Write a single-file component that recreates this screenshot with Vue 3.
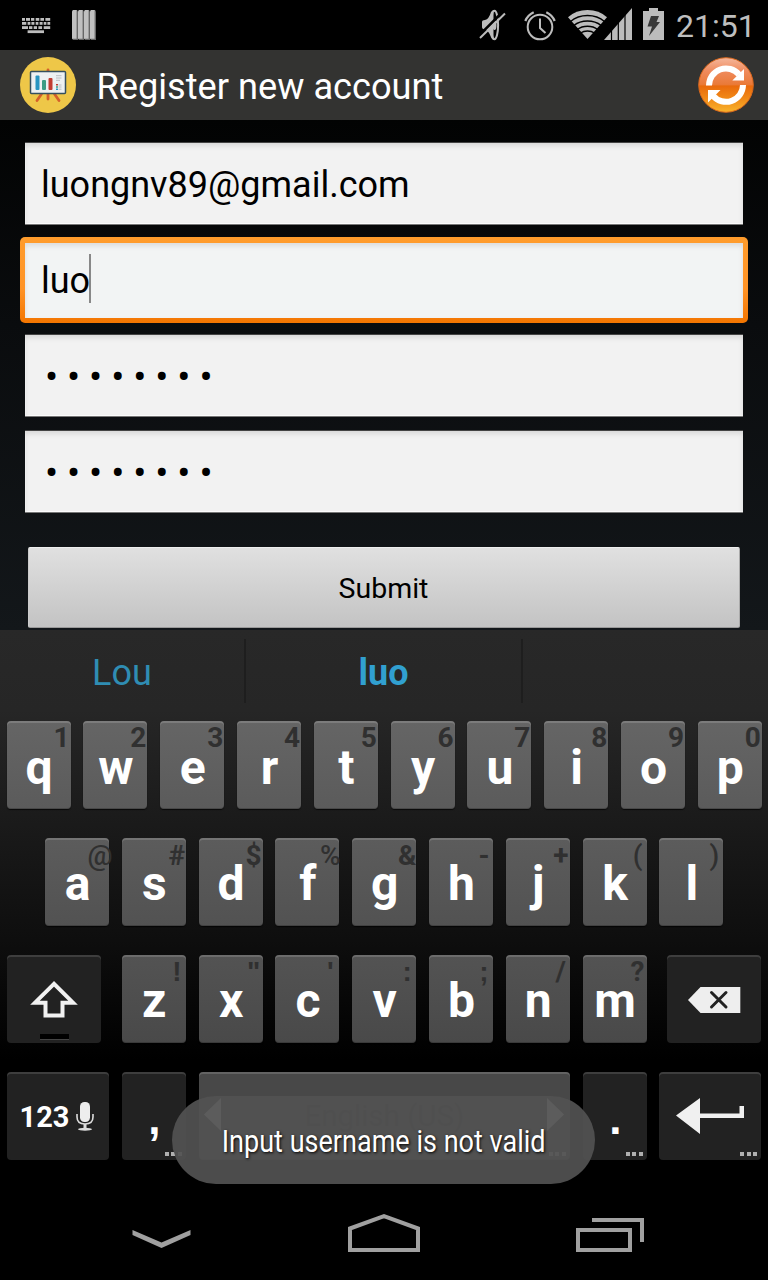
<script setup>
const spread = (letters, hints) => [...letters].map((c, i) => ({ c, h: hints[i] }))
const row1 = spread('qwertyuiop', '1234567890')
const row2 = spread('asdfghjkl', '@#$%&-+()')
const row3 = spread('zxcvbnm', '!"\':;/?')
const hintClass = (h) => ({ light: '@%()'.includes(h), square: '!:;\'"'.includes(h) })
const keycaps = [
  [0, 0, 3], [4, 0, 4], [9, 0, 3.3], [13.7, 0, 3.6], [18.4, 0, 3.6], [23.4, 0, 4.8],
  [0, 4, 4.3], [5.6, 4, 2.8], [9.4, 4, 3], [13.7, 4, 2.7], [17.6, 4, 3], [21.7, 4, 2.7], [25.4, 4, 2.8],
  [0, 8.2, 6], [7, 8.2, 3.4], [11.7, 8.2, 3.3], [16.4, 8.2, 3.7], [21.7, 8.2, 6.5],
]
</script>

<template>
  <div class="phone">
    <header class="status">
      <svg class="ic-kb" width="29" height="16" viewBox="0 0 29 16" fill="#bdbdbd">
        <rect v-for="(k, i) in keycaps" :key="i" :x="k[0]" :y="k[1]" :width="k[2]" height="2.8" />
        <rect x="5.6" y="12.3" width="16.4" height="2.8" />
      </svg>
      <svg class="ic-bars" width="24" height="30" viewBox="0 0 24 30">
        <g v-for="n in 4" :key="n" :transform="`translate(${(n - 1) * 6} 0)`">
          <path d="M0 1.5L1 0h4l1 1.5V30H1L0 28.5z" fill="#666" />
          <path d="M0 1.5L1 0h3.6v28.8H0z" fill="#c0c0c0" />
        </g>
      </svg>
      <span class="grow"></span>
      <svg class="ic-mute" width="28" height="32" viewBox="0 0 28 32">
        <path d="M3 13Q3 11 6 11Q10 10 12 3Q14 .5 15.5 1.2V31Q13 31.500 11.500 27Q9 21 6 20.500Q3 20 3 18z" fill="#bcbcbc" />
        <ellipse cx="15.500" cy="16" rx="3.600" ry="14.300" fill="#000" stroke="#bcbcbc" stroke-width="2" />
        <path d="M9 13Q12 10 13 5L14.500 4V28L13 27Q12 22 9 19z" fill="#bcbcbc" />
        <ellipse cx="15.500" cy="16" rx="2" ry="5" fill="#bcbcbc" />
        <path d="M-.5 27L24 2.500" stroke="#000" stroke-width="2.500" />
        <path d="M1 29L26 4.500" stroke="#bcbcbc" stroke-width="2" />
      </svg>
      <svg class="ic-alarm" width="32" height="32" viewBox="0 0 32 32" fill="none" stroke="#bcbcbc" stroke-width="2">
        <circle cx="16" cy="18" r="12.300" />
        <path d="M16 9.500V19l5.500 5" />
        <path d="M1.300 12A17 17 0 0 1 9.700 3.300M22.300 3.300A17 17 0 0 1 30.700 12" stroke-width="2.300" />
      </svg>
      <svg class="ic-wifi" width="39" height="31" viewBox="0 0 39 31">
        <path d="M19.500 30L0 8.200Q8 1 19.500 1T39 8.200z" fill="#bcbcbc" />
        <g fill="none" stroke="#000" stroke-width="1.500">
          <path d="M2.500 12.500Q9.500 6.600 19.500 6.600T36.500 12.500" />
          <path d="M5.800 16.500Q11.500 12 19.500 12T33.200 16.500" />
          <path d="M9.300 20.500Q13.500 17.300 19.500 17.300T29.700 20.500" />
          <path d="M12.500 24Q15.500 22 19.500 22T26.500 24" />
        </g>
      </svg>
      <svg class="ic-signal" width="28" height="32" viewBox="0 0 28 32">
        <path d="M0 32L28 0v32z" fill="#bcbcbc" />
        <path d="M7.500 0v32M14.300 0v32M21 0v32" stroke="#000" stroke-width="1.200" />
      </svg>
      <svg class="ic-batt" width="21" height="32" viewBox="0 0 21 32">
        <path d="M6 0h9v3h6v29H0V3h6z" fill="#bcbcbc" />
        <path d="M8 8h8l-2.500 6H17L6 28l3-9.500H4.500z" fill="#383838" />
      </svg>
      <time class="clock">21:51</time>
    </header>

    <div class="bar">
      <svg class="logo" width="56" height="56" viewBox="0 0 56 56">
        <circle cx="28" cy="28" r="28" fill="#eec748" />
        <g stroke="#d4602b" stroke-width="2.800" stroke-linecap="round">
          <path d="M28 13v3M28 36v6M21.500 37L17 43.500M34.500 37L39 43.500" />
        </g>
        <rect x="10.500" y="14.500" width="35" height="22" rx="1" fill="#edf1f2" stroke="#34505f" stroke-width="1.500" />
        <rect x="15.500" y="18.500" width="4" height="14.500" rx="1" fill="#2795c1" />
        <rect x="22" y="23" width="4" height="10" rx="1" fill="#3a9c84" />
        <rect x="28.500" y="21" width="4" height="12" rx="1" fill="#c13c31" />
        <path d="M36 18.700h5.500M36 21h5.500M36 23.300h4" stroke="#b9bec2" stroke-width="1" />
        <path d="M38.500 28h3M38.500 30h3M38.500 32.200h3" stroke="#b9bec2" stroke-width="1" />
        <path d="M36 27.800h2" stroke="#c13c31" stroke-width="1.600" />
        <path d="M36 30h2" stroke="#3a9c84" stroke-width="1.600" />
        <path d="M36 32.200h2" stroke="#2795c1" stroke-width="1.600" />
      </svg>
      <h1>Register new account</h1>
      <svg class="refresh" width="56" height="56" viewBox="0 0 56 56">
        <defs>
          <linearGradient id="orb" x1="0" y1="0" x2="0" y2="1">
            <stop offset="0" stop-color="#f5b79c" />
            <stop offset=".25" stop-color="#ef8a5c" />
            <stop offset=".49" stop-color="#ea7a38" />
            <stop offset=".52" stop-color="#e96a0c" />
            <stop offset=".75" stop-color="#f18a18" />
            <stop offset="1" stop-color="#f8b42c" />
          </linearGradient>
        </defs>
        <circle cx="28" cy="28" r="27.300" fill="url(#orb)" stroke="#d9671c" stroke-width="1" />
        <g fill="none" stroke="#fff" stroke-width="6">
          <path d="M11 28.500A17 17 0 0 1 41 17.500" />
          <path d="M45 28A17 17 0 0 1 15 38.800" />
        </g>
        <path d="M46 12v11.500H34.300zM10 45.500V33h12.500z" fill="#fff" />
      </svg>
    </div>

    <main class="form">
      <div class="field">luongnv89@gmail.com</div>
      <div class="field focus">luo<i class="caret"></i></div>
      <div class="field dots">••••••••</div>
      <div class="field dots">••••••••</div>
      <button class="submit">Submit</button>
    </main>

    <section class="keyboard">
      <div class="suggest">
        <span>Lou</span><span class="best">luo</span><span></span>
      </div>
      <div class="row r1">
        <div v-for="k in row1" :key="k.c" class="key"><b>{{ k.c }}</b><em>{{ k.h }}</em></div>
      </div>
      <div class="row r2">
        <div v-for="k in row2" :key="k.c" class="key"><b>{{ k.c }}</b><em :class="hintClass(k.h)">{{ k.h }}</em></div>
      </div>
      <div class="row r3">
        <div class="key fn shift">
          <svg width="94" height="88" viewBox="0 0 94 88">
            <path d="M47 28.800L28 47.700H38.500V60.500H55.500V47.700H66z" fill="none" stroke="#f2f2f2" stroke-width="4" />
            <rect x="33" y="79" width="29" height="5" fill="#000" />
            <path d="M33 84.500h29" stroke="#444" stroke-width="1" />
          </svg>
        </div>
        <div v-for="k in row3" :key="k.c" class="key"><b>{{ k.c }}</b><em :class="hintClass(k.h)">{{ k.h }}</em></div>
        <div class="key fn del">
          <svg width="94" height="88" viewBox="0 0 94 88">
            <path d="M21 45L33.500 32H73.300V58H33.500z" fill="#eee" />
            <path d="M44.500 37.500L59 52M59 37.500L44.500 52" stroke="#222" stroke-width="3" stroke-linecap="round" />
          </svg>
        </div>
      </div>
      <div class="row r4">
        <div class="key fn wide num">
          <span>123</span>
          <svg width="18" height="30" viewBox="0 0 18 30" fill="none" stroke="#dcdcdc">
            <rect x="4" y="0" width="10" height="20" rx="4.500" fill="#ededed" stroke="none" />
            <path d="M1 12v3q0 7 8 7t8-7v-3" stroke-width="1.600" />
            <path d="M9 22v4" stroke-width="3" />
            <ellipse cx="9" cy="27.300" rx="7" ry="1.500" fill="#dcdcdc" stroke="none" />
          </svg>
        </div>
        <div class="key fn punct"><b>,</b><i class="more"><u></u><u></u><u></u></i></div>
        <div class="key space">
          <svg width="18" height="34" viewBox="0 0 18 34"><path d="M17 0v33L0 16.500z" fill="#fff" fill-opacity=".85" /></svg>
          <span>English (US)</span>
          <svg width="18" height="34" viewBox="0 0 18 34"><path d="M0 0v33L17 16.500z" fill="#fff" fill-opacity=".85" /></svg>
          <i class="more"><u></u><u></u><u></u></i>
        </div>
        <div class="key fn punct"><b>.</b><i class="more"><u></u><u></u><u></u></i></div>
        <div class="key fn wide enter">
          <svg width="102" height="88" viewBox="0 0 102 88">
            <path d="M17 43.500L41 26V41.500H80.500V34H85V46H41V62z" fill="#f0f0f0" />
          </svg>
          <i class="more"><u></u><u></u><u></u></i>
        </div>
      </div>
    </section>

    <nav class="nav">
      <svg width="60" height="40" viewBox="0 0 60 40"><path d="M.5 16V21L29.500 34L58.500 21V16L29.500 28.500z" fill="#a0a0a0" /></svg>
      <svg width="72" height="40" viewBox="0 0 72 40"><path d="M2 14.500L36 2.200L70 14.500V36H2z" fill="none" stroke="#a0a0a0" stroke-width="4" /></svg>
      <svg width="68" height="40" viewBox="0 0 68 40"><path d="M2 16h52v20H2zM16 6h50v22" fill="none" stroke="#a0a0a0" stroke-width="4" /></svg>
    </nav>

    <div class="toast"><span>Input username is not valid</span></div>
  </div>
</template>

<style>
body { margin: 0; background: #000; }
</style>

<style scoped>
* { box-sizing: border-box; }
.phone {
  position: relative; width: 768px; height: 1280px; overflow: hidden; background: #000;
  display: flex; flex-direction: column; font-family: Roboto, "Liberation Sans", sans-serif;
}
svg { display: block; flex: none; }
.status { height: 50px; display: flex; align-items: flex-start; padding-left: 22px; }
.grow { flex: 1; }
.ic-kb { margin-top: 18px; }
.ic-bars { margin: 10px 0 0 21px; }
.ic-mute { margin: 9px 17px 0 0; }
.ic-alarm { margin: 9px 12px 0 0; }
.ic-wifi { margin: 9px -3px 0 0; }
.ic-signal { margin: 8px 11px 0 0; }
.ic-batt { margin: 8px 12px 0 0; }
.clock { width: 92px; font-size: 32px; line-height: 38px; margin-top: 7px; color: #bebebe; white-space: nowrap; }
.bar { height: 70px; background: #333331; display: flex; align-items: center; padding: 0 14px 0 20px; }
h1 { flex: 1; margin: 4px 0 0 20.500px; font-size: 36.200px; line-height: 42px; font-weight: 400; color: #fff; }
.form {
  height: 510px; padding: 23px 25px 0; display: flex; flex-direction: column;
  background: linear-gradient(#020303, #0a0c0e 40%, #13171a);
}
.field {
  position: relative; height: 81px; margin-bottom: 15px; padding-left: 16px; font-size: 36px; line-height: 85px;
  color: #000; background: #f2f2f2; box-shadow: inset 0 3px 5px #d9d9d9, inset 1px -1px 0 #fff, 0 1px 0 #777, 0 -1px 0 #444; flex: none;
}
.focus {
  height: 75px; margin: 4px 0 17px; line-height: 77px; background: #f2f4f4;
  box-shadow: inset 0 3px 5px #dcdcdc;
}
.focus::before {
  content: ""; position: absolute; inset: -6px -5px -5px; border-radius: 5px; z-index: 0;
  background: linear-gradient(#ff9c2c, #ff9326 60%, #f37500); clip-path: polygon(0 0, 100% 0, 100% 100%, 0 100%, 0 6px, 5px 6px, 5px calc(100% - 5px), calc(100% - 5px) calc(100% - 5px), calc(100% - 5px) 6px, 0 6px);
}
.caret { position: absolute; left: 64px; top: 11px; width: 2px; height: 49px; background: #888; }
.dots { font-size: 39px; letter-spacing: 8.900px; padding-left: 20px; line-height: 84px; }
.submit {
  height: 81px; margin: 20px 3px 0; border: 1px solid #999; border-color: #eee #aaa #999 #ccc; border-radius: 2px; padding: 1px 1px 0 0;
  background: linear-gradient(#e0e0e0, #c3c3c3); font: 28.500px Roboto, sans-serif; color: #000;
}
.keyboard { height: 554px; background: linear-gradient(#282828, #262626 80px, #0e0e0e 310px, #000 430px); }
.suggest { height: 91px; display: flex; padding-top: 9px; }
.suggest span {
  height: 64px; line-height: 69px; flex: 1; text-align: center; font-size: 36px; color: #2f8db3; border-right: 2px solid #1e1e1e;
}
.suggest span:first-child { flex: 0 0 246px; }
.suggest span:last-child { flex: 0 0 245px; border: 0; }
.suggest .best { color: #31a0d0; font-weight: 700; }
.row { display: flex; gap: 12.800px; height: 88px; margin-bottom: 29px; }
.r1 { padding-left: 6.600px; }
.r3, .r4 { padding-left: 7px; }
.r2 { padding-left: 45px; }
.key {
  position: relative; width: 64px; height: 88px; flex: none; border-radius: 4px; color: #fff; text-align: center;
  box-shadow: inset 0 2px 0 rgba(255, 255, 255, .15), inset 0 -1px 0 rgba(0, 0, 0, .2), 0 1px 1px rgba(0, 0, 0, .7);
}
.r1 .key { background: linear-gradient(#656565, #5b5b5b); }
.r2 .key { background: linear-gradient(#5c5c5c, #525252); }
.r3 .key { background: linear-gradient(#535353, #494949); }
.r4 .key { background: #484848; }
.row .fn { background: #222; box-shadow: inset 0 2px 0 rgba(255, 255, 255, .13); }
.key b { display: block; font-size: 48px; line-height: 56px; padding: 18px 0 0 1px; font-weight: 700; }
.r1 .key b { padding-top: 19px; }
.key em {
  position: absolute; top: 1px; right: -11px; width: 40px; text-align: center; font-style: normal;
  font-size: 28px; line-height: 32px; font-weight: 700; color: #303030;
}
.r2 em { top: 2px; }
.key em.light { font-weight: 500; }
.key em.square { font-family: "Liberation Sans", sans-serif; }
.key .more { position: absolute; right: 4px; bottom: 4px; display: flex; gap: 2.500px; }
.more u { width: 4px; height: 4px; background: #b0b0b0; }
.key.punct b { font-family: "Liberation Sans", sans-serif; font-size: 44px; padding-top: 19px; }
.shift, .del { width: 94px; }
.shift { margin-right: 8px; }
.del { margin-left: 7.200px; }
.wide { width: 102px; }
.enter { margin-left: -.5px; }
.num { display: flex; justify-content: center; align-items: center; gap: 7px; font-size: 29px; font-weight: 700; padding: 2px 2px 0 0; }
.space { width: 371.400px; display: flex; justify-content: space-between; padding: 26px 5px 0; }
.space span { font-size: 29.500px; line-height: 37px; color: #303030; }
.nav { flex: 1; display: flex; align-items: flex-start; padding: 30px 124px 0 132px; justify-content: space-between; }
.toast {
  position: absolute; left: 172px; top: 1096px; width: 423px; height: 88px; border-radius: 44px;
  background: rgba(82, 82, 82, .93); color: #fff; font-size: 32px; line-height: 90px; display: flex; justify-content: center;
  text-shadow: 1px 1px 3px #000; white-space: nowrap;
}
.toast span { transform: scaleX(.845); }
</style>
